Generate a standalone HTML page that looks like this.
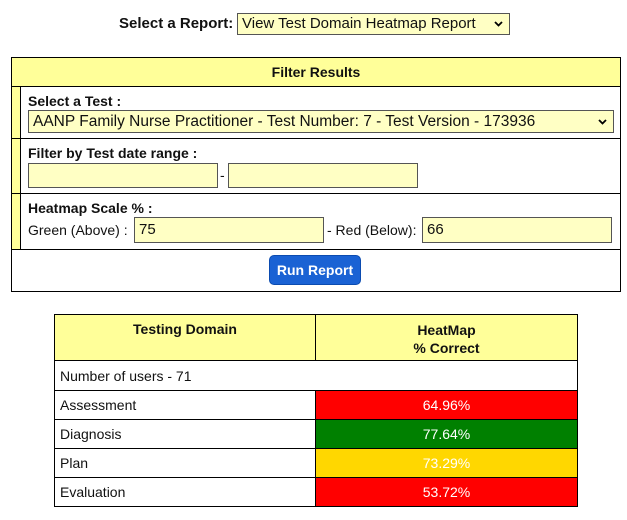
<!DOCTYPE html>
<html><head><style>
body{margin:0;width:627px;height:520px;background:#fff;font-family:"Liberation Sans",Arial,sans-serif;color:#111;position:relative;overflow:hidden}
.a{position:absolute;box-sizing:border-box}
.inp{position:absolute;box-sizing:border-box;background:#ffffc4;border:1px solid #555;font-size:15px;padding:2px 4px;line-height:19px}
.b{font-weight:bold;font-size:14px}
.t{font-size:14px}
</style></head><body>
<div class="a b" style="left:119px;top:15px;font-size:15px">Select a Report:</div>
<div class="inp" style="left:237px;top:13px;width:273px;height:22px;padding:0 4px;font-size:15px;line-height:20px">View Test Domain Heatmap Report<svg style="position:absolute;right:6px;top:7px" width="9" height="6" viewBox="0 0 9 6"><path d="M1 1 L4.5 4.5 L8 1" fill="none" stroke="#000" stroke-width="1.8"/></svg></div>

<div class="a" style="left:11px;top:57px;width:610px;height:235px;border:1px solid #000"></div>
<div class="a" style="left:12px;top:58px;width:608px;height:29px;background:#ffff99;border-bottom:1px solid #000;text-align:center;line-height:28px" ><span class="b">Filter Results</span></div>
<div class="a" style="left:12px;top:87px;width:9px;height:162px;background:#ffff99;border-right:1px solid #000"></div>
<div class="a" style="left:12px;top:138px;width:608px;height:1px;background:#000"></div>
<div class="a" style="left:12px;top:193px;width:608px;height:1px;background:#000"></div>
<div class="a" style="left:12px;top:249px;width:608px;height:1px;background:#000"></div>

<div class="a b" style="left:28px;top:93px">Select a Test :</div>
<div class="inp" style="left:28px;top:110px;width:586px;height:23px;padding:0 4px;line-height:21px;font-size:15.5px">AANP Family Nurse Practitioner - Test Number: 7 - Test Version - 173936<svg style="position:absolute;right:6px;top:8px" width="9" height="6" viewBox="0 0 9 6"><path d="M1 1 L4.5 4.5 L8 1" fill="none" stroke="#000" stroke-width="1.8"/></svg></div>

<div class="a b" style="left:28px;top:145px">Filter by Test date range :</div>
<div class="inp" style="left:28px;top:163px;width:190px;height:25px"></div>
<div class="a t" style="left:220px;top:167px">-</div>
<div class="inp" style="left:228px;top:163px;width:190px;height:25px"></div>

<div class="a b" style="left:28px;top:200px">Heatmap Scale % :</div>
<div class="a t" style="left:28px;top:222px">Green (Above) :</div>
<div class="inp" style="left:134px;top:217px;width:190px;height:26px">75</div>
<div class="a t" style="left:327px;top:222px">- Red (Below):</div>
<div class="inp" style="left:422px;top:217px;width:190px;height:26px">66</div>

<div class="a" style="left:269px;top:255px;width:92px;height:30px;background:#1a62d4;border:1px solid #0b4bb0;border-radius:5px;color:#fff;text-align:center;line-height:28px;font-weight:bold;font-size:14px">Run Report</div>

<div class="a" style="left:54px;top:314px;width:524px;height:193px;border:1px solid #000"></div>
<div class="a" style="left:55px;top:315px;width:522px;height:46px;background:#ffff99;border-bottom:1px solid #000"></div>
<div class="a" style="left:315px;top:315px;width:1px;height:46px;background:#000"></div>
<div class="a b" style="left:55px;top:321px;width:260px;text-align:center">Testing Domain</div>
<div class="a b" style="left:316px;top:321px;width:261px;text-align:center;line-height:18px">HeatMap<br>% Correct</div>
<div class="a t" style="left:60px;top:368px">Number of users - 71</div>

<div class="a" style="left:55px;top:390px;width:522px;height:1px;background:#000"></div>
<div class="a" style="left:55px;top:419px;width:522px;height:1px;background:#000"></div>
<div class="a" style="left:55px;top:448px;width:522px;height:1px;background:#000"></div>
<div class="a" style="left:55px;top:477px;width:522px;height:1px;background:#000"></div>
<div class="a" style="left:316px;top:391px;width:261px;height:28px;background:#ff0000"></div>
<div class="a" style="left:316px;top:420px;width:261px;height:28px;background:#008000"></div>
<div class="a" style="left:316px;top:449px;width:261px;height:28px;background:#ffd700"></div>
<div class="a" style="left:316px;top:478px;width:261px;height:28px;background:#ff0000"></div>
<div class="a" style="left:315px;top:390px;width:1px;height:117px;background:#000"></div>

<div class="a t" style="left:60px;top:397px">Assessment</div>
<div class="a t" style="left:60px;top:426px">Diagnosis</div>
<div class="a t" style="left:60px;top:455px">Plan</div>
<div class="a t" style="left:60px;top:484px">Evaluation</div>
<div class="a t" style="left:316px;top:397px;width:261px;text-align:center;color:#fff">64.96%</div>
<div class="a t" style="left:316px;top:426px;width:261px;text-align:center;color:#fff">77.64%</div>
<div class="a t" style="left:316px;top:455px;width:261px;text-align:center;color:#fff">73.29%</div>
<div class="a t" style="left:316px;top:484px;width:261px;text-align:center;color:#fff">53.72%</div>
</body></html>
